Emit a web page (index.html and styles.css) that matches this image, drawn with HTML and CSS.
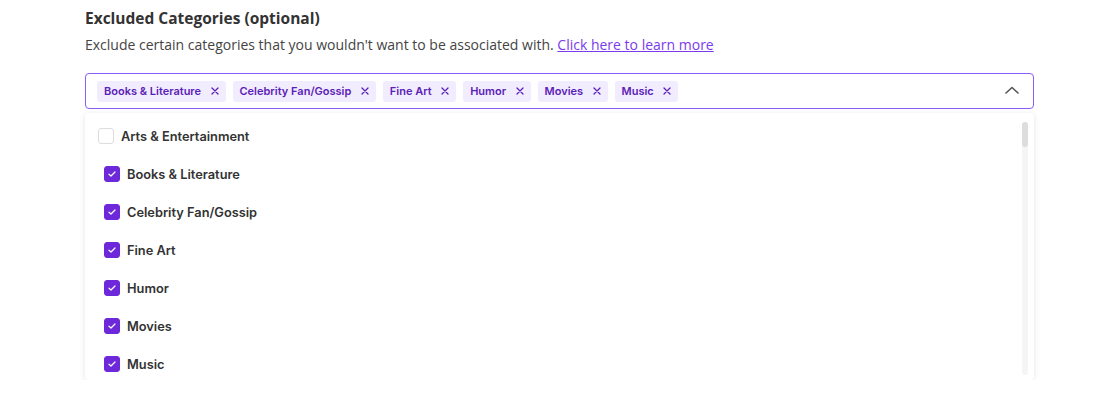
FILE: index.html
```html
<!DOCTYPE html>
<html lang="en">
<head>
  <meta charset="UTF-8">
  <title>Excluded Categories</title>
  <link rel="stylesheet" href="styles.css">
</head>
<body>
  <div class="field">
    <h3 class="field-label">Excluded Categories (optional)</h3>
    <p class="field-help">Exclude certain categories that you wouldn't want to be associated with. <a href="#">Click here to learn more</a></p>

    <div class="select">
      <div class="chips">
        <span class="chip">Books &amp; Literature <svg class="chip-x" width="8" height="8" viewBox="0 0 8 8"><path d="M1 1 L7 7 M7 1 L1 7" stroke="#5b21b6" stroke-width="1.3" stroke-linecap="round"/></svg></span>
        <span class="chip">Celebrity Fan/Gossip <svg class="chip-x" width="8" height="8" viewBox="0 0 8 8"><path d="M1 1 L7 7 M7 1 L1 7" stroke="#5b21b6" stroke-width="1.3" stroke-linecap="round"/></svg></span>
        <span class="chip">Fine Art <svg class="chip-x" width="8" height="8" viewBox="0 0 8 8"><path d="M1 1 L7 7 M7 1 L1 7" stroke="#5b21b6" stroke-width="1.3" stroke-linecap="round"/></svg></span>
        <span class="chip">Humor <svg class="chip-x" width="8" height="8" viewBox="0 0 8 8"><path d="M1 1 L7 7 M7 1 L1 7" stroke="#5b21b6" stroke-width="1.3" stroke-linecap="round"/></svg></span>
        <span class="chip">Movies <svg class="chip-x" width="8" height="8" viewBox="0 0 8 8"><path d="M1 1 L7 7 M7 1 L1 7" stroke="#5b21b6" stroke-width="1.3" stroke-linecap="round"/></svg></span>
        <span class="chip">Music <svg class="chip-x" width="8" height="8" viewBox="0 0 8 8"><path d="M1 1 L7 7 M7 1 L1 7" stroke="#5b21b6" stroke-width="1.3" stroke-linecap="round"/></svg></span>
      </div>
      <svg class="chevron" width="14" height="8" viewBox="0 0 14 8"><path d="M1 7 L7 1.5 L13 7" fill="none" stroke="#555" stroke-width="1.6" stroke-linecap="round" stroke-linejoin="round"/></svg>
    </div>

    <div class="menu">
      <ul class="options">
        <li class="option parent"><span class="box"></span>Arts &amp; Entertainment</li>
        <li class="option"><span class="box checked"><svg width="10" height="8" viewBox="0 0 10 8"><path d="M2 4.2 L4 6 L8 2" fill="none" stroke="#fff" stroke-width="1.2" stroke-linecap="round" stroke-linejoin="round"/></svg></span>Books &amp; Literature</li>
        <li class="option"><span class="box checked"><svg width="10" height="8" viewBox="0 0 10 8"><path d="M2 4.2 L4 6 L8 2" fill="none" stroke="#fff" stroke-width="1.2" stroke-linecap="round" stroke-linejoin="round"/></svg></span>Celebrity Fan/Gossip</li>
        <li class="option"><span class="box checked"><svg width="10" height="8" viewBox="0 0 10 8"><path d="M2 4.2 L4 6 L8 2" fill="none" stroke="#fff" stroke-width="1.2" stroke-linecap="round" stroke-linejoin="round"/></svg></span>Fine Art</li>
        <li class="option"><span class="box checked"><svg width="10" height="8" viewBox="0 0 10 8"><path d="M2 4.2 L4 6 L8 2" fill="none" stroke="#fff" stroke-width="1.2" stroke-linecap="round" stroke-linejoin="round"/></svg></span>Humor</li>
        <li class="option"><span class="box checked"><svg width="10" height="8" viewBox="0 0 10 8"><path d="M2 4.2 L4 6 L8 2" fill="none" stroke="#fff" stroke-width="1.2" stroke-linecap="round" stroke-linejoin="round"/></svg></span>Movies</li>
        <li class="option"><span class="box checked"><svg width="10" height="8" viewBox="0 0 10 8"><path d="M2 4.2 L4 6 L8 2" fill="none" stroke="#fff" stroke-width="1.2" stroke-linecap="round" stroke-linejoin="round"/></svg></span>Music</li>
      </ul>
      <div class="scrollbar"><div class="thumb"></div></div>
    </div>
  </div>
</body>
</html>
```

FILE: styles.css
```css
body { margin: 0; background: #fff; font-family: "Open Sans", sans-serif; color: #333; }
.field { width: 949px; margin: 0 0 0 85px; padding-top: 7px; }
.field-label { margin: 0; font-size: 15.5px; font-weight: 700; color: #333; line-height: 22px; }
.field-help { margin: 5px 0 0; font-size: 14px; color: #444; line-height: 22px; }
.field-help a { color: #7c3aed; }

.select { margin-top: 17px; height: 34px; border: 1px solid #8b5cf6; border-radius: 4px; display: flex; align-items: center; justify-content: space-between; padding: 0 14px 0 11px; }
.chips { display: flex; gap: 7px; }
.chip { display: flex; align-items: center; gap: 9.5px; height: 21px; padding: 0 7px; background: #f1edff; border-radius: 3px; font-family: Inter, sans-serif; font-size: 11px; font-weight: 600; color: #5b21b6; }
.chevron { margin-top: -2px; }

.menu { margin-top: 4px; height: 267px; border-radius: 4px; background: #fff; box-shadow: 0 1px 6px rgba(0, 0, 0, 0.1); display: flex; justify-content: space-between; overflow: hidden; }
.options { list-style: none; margin: 0; padding: 4px 0 0 13px; }
.option { display: flex; align-items: center; height: 38px; padding-left: 6px; font-family: Inter, sans-serif; font-size: 12.8px; font-weight: 600; color: #333; }
.option.parent { padding-left: 0; }
.box { width: 14px; height: 14px; border: 1px solid #ddd; border-radius: 3px; margin-right: 7px; display: flex; align-items: center; justify-content: center; }
.box.checked { background: #6d28d9; border-color: #6d28d9; }
.scrollbar { width: 6px; margin: 9px 6px 5px 0; background: #f5f5f5; border-radius: 3px; }
.thumb { height: 25px; background: #ddd; border-radius: 3px; }
```
